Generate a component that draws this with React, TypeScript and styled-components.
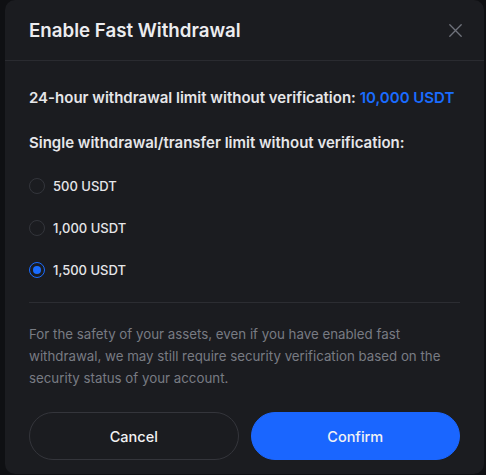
import React, { useState } from "react";
import styled, { createGlobalStyle } from "styled-components";

const Global = createGlobalStyle`
  html, body { margin: 0; padding: 0; background: #0f1013; }
  body { font-family: Inter, "Noto Sans", sans-serif; -webkit-font-smoothing: antialiased; }
  * { box-sizing: border-box; }
`;

const Page = styled.div`
  width: 486px;
  height: 475px;
  padding: 0 2px 1px 5px;
  background: #0f1013;
  display: flex;
  overflow: hidden;
`;

const Modal = styled.div`
  flex: 1;
  background: #1b1c20;
  border-radius: 10px;
  display: flex;
  flex-direction: column;
`;

const Header = styled.div`
  height: 61px;
  display: flex;
  align-items: center;
  justify-content: space-between;
  padding: 0 22px 0 24px;
  border-bottom: 1px solid #2a2b30;
`;

const Title = styled.h2`
  margin: 0;
  font-size: 18.7px;
  font-weight: 600;
  color: #ececef;
  padding-top: 1px;
`;

const Close = styled.button`
  background: none;
  border: none;
  padding: 0;
  width: 14px;
  height: 14px;
  display: flex;
  align-items: center;
  justify-content: center;
  cursor: pointer;
`;

const Body = styled.div`
  padding: 26px 24px 0 24px;
  display: flex;
  flex-direction: column;
`;

const Label = styled.p<{ $mb?: number }>`
  margin: 0 0 ${(p) => p.$mb ?? 0}px 0;
  font-size: 15px;
  font-weight: 600;
  line-height: 22px;
  color: #e6e6e9;
`;

const Accent = styled.span`
  color: #1a6cff;
`;

const Options = styled.div`
  display: flex;
  flex-direction: column;
  gap: 20px;
  margin-top: 21px;
`;

const Option = styled.label`
  display: flex;
  align-items: center;
  gap: 8px;
  height: 22px;
  cursor: pointer;
  font-size: 13px;
  font-weight: 500;
  color: #e6e6e9;
`;

const Radio = styled.span<{ $on: boolean }>`
  width: 16px;
  height: 16px;
  border-radius: 50%;
  border: 1px solid ${(p) => (p.$on ? "#1a6cff" : "#33353b")};
  display: flex;
  align-items: center;
  justify-content: center;
  &::after {
    content: "";
    width: 8px;
    height: 8px;
    border-radius: 50%;
    background: ${(p) => (p.$on ? "#1a6cff" : "transparent")};
  }
`;

const Divider = styled.div`
  height: 1px;
  background: #2c2d32;
  margin: 21px 0 20px;
`;

const Note = styled.p`
  margin: 0;
  font-size: 13.3px;
  line-height: 22px;
  color: #787b83;
`;

const Footer = styled.div`
  display: grid;
  grid-template-columns: 1fr 1fr;
  gap: 12px;
  padding: 23px 24px 0 24px;
`;

const Btn = styled.button<{ $primary?: boolean }>`
  height: 48px;
  border-radius: 24px;
  font-family: inherit;
  font-size: 14.5px;
  font-weight: 500;
  cursor: pointer;
  color: #f2f2f4;
  background: ${(p) => (p.$primary ? "#1a66ff" : "transparent")};
  border: 1px solid ${(p) => (p.$primary ? "#1a66ff" : "#34353b")};
`;

const options = ["500 USDT", "1,000 USDT", "1,500 USDT"];

export default function App() {
  const [sel, setSel] = useState(2);
  return (
    <>
      <Global />
      <Page>
        <Modal>
          <Header>
            <Title>Enable Fast Withdrawal</Title>
            <Close aria-label="close">
              <svg width="13" height="13" viewBox="0 0 13 13">
                <path d="M0.8 0.8L12.2 12.2M12.2 0.8L0.8 12.2" stroke="#6f727b" strokeWidth="1.3" strokeLinecap="round" />
              </svg>
            </Close>
          </Header>
          <Body>
            <Label $mb={23}>
              24-hour withdrawal limit without verification: <Accent>10,000 USDT</Accent>
            </Label>
            <Label>Single withdrawal/transfer limit without verification:</Label>
            <Options>
              {options.map((o, i) => (
                <Option key={o} onClick={() => setSel(i)}>
                  <Radio $on={sel === i} />
                  {o}
                </Option>
              ))}
            </Options>
            <Divider />
            <Note>
              For the safety of your assets, even if you have enabled fast withdrawal, we may still
              require security verification based on the security status of your account.
            </Note>
          </Body>
          <Footer>
            <Btn>Cancel</Btn>
            <Btn $primary>Confirm</Btn>
          </Footer>
        </Modal>
      </Page>
    </>
  );
}
